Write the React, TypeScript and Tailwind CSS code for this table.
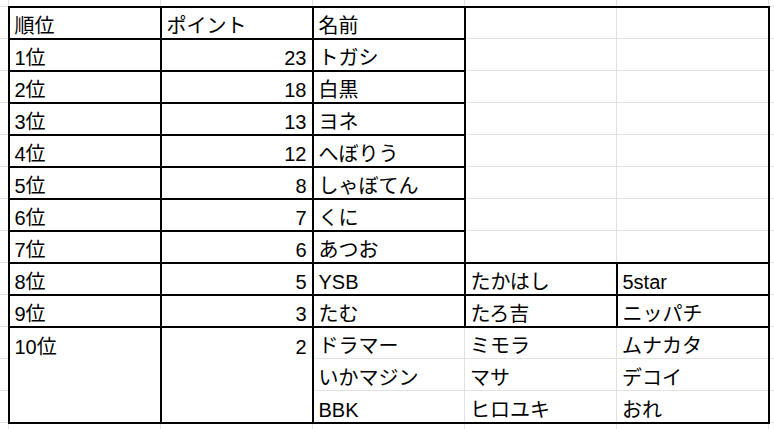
const G = 'border border-[#e2e2e2]';
const B = 'border-2 border-black';
const cell = 'h-[32px] px-[5px] pb-0 pt-0 align-bottom whitespace-nowrap overflow-hidden leading-[24px]';

type Row = { rank: string; pt: string; name: string; d?: string; e?: string };

const top: Row[] = [
  { rank: '1位', pt: '23', name: 'トガシ' },
  { rank: '2位', pt: '18', name: '白黒' },
  { rank: '3位', pt: '13', name: 'ヨネ' },
  { rank: '4位', pt: '12', name: 'へぼりう' },
  { rank: '5位', pt: '8', name: 'しゃぼてん' },
  { rank: '6位', pt: '7', name: 'くに' },
  { rank: '7位', pt: '6', name: 'あつお' },
];

const tied: Row[] = [
  { rank: '8位', pt: '5', name: 'YSB', d: 'たかはし', e: '5star' },
  { rank: '9位', pt: '3', name: 'たむ', d: 'たろ吉', e: 'ニッパチ' },
];

const tenth = [
  { name: 'ドラマー', d: 'ミモラ', e: 'ムナカタ' },
  { name: 'いかマジン', d: 'マサ', e: 'デコイ' },
  { name: 'BBK', d: 'ヒロユキ', e: 'おれ' },
];

function Edge({ className = '' }: { className?: string }) {
  return <td className={`${cell} ${G} ${className}`} />;
}

export default function App() {
  return (
    <div
      className="w-[774px] h-[429px] overflow-hidden bg-white text-black text-[20px]"
      style={{ fontFamily: '"Liberation Sans", Arial, "Noto Sans CJK JP", sans-serif' }}
    >
      <table className="border-collapse table-fixed w-[860px] min-w-[860px] -ml-[32px] -mt-[26px]">
        <colgroup>
          <col className="w-[40px]" />
          <col className="w-[152px]" />
          <col className="w-[152px]" />
          <col className="w-[152px]" />
          <col className="w-[152px]" />
          <col className="w-[152px]" />
          <col className="w-[60px]" />
        </colgroup>
        <tbody>
          {/* row above the table */}
          <tr>
            <Edge />
            <Edge />
            <Edge />
            <Edge />
            <Edge />
            <Edge />
            <Edge />
          </tr>
          {/* header */}
          <tr>
            <Edge />
            <td className={`${cell} ${B}`}>順位</td>
            <td className={`${cell} ${B}`}>ポイント</td>
            <td className={`${cell} ${B}`}>名前</td>
            <td className={`${cell} ${G} border-t-2 border-t-black`} />
            <td className={`${cell} ${G} border-t-2 border-t-black border-r-2 border-r-black`} />
            <Edge />
          </tr>
          {top.map((r) => (
            <tr key={r.rank}>
              <Edge />
              <td className={`${cell} ${B}`}>{r.rank}</td>
              <td className={`${cell} ${B} text-right`}>{r.pt}</td>
              <td className={`${cell} ${B}`}>{r.name}</td>
              <td className={`${cell} ${G}`} />
              <td className={`${cell} ${G} border-r-2 border-r-black`} />
              <Edge />
            </tr>
          ))}
          {tied.map((r) => (
            <tr key={r.rank}>
              <Edge />
              <td className={`${cell} ${B}`}>{r.rank}</td>
              <td className={`${cell} ${B} text-right`}>{r.pt}</td>
              <td className={`${cell} ${B}`}>{r.name}</td>
              <td className={`${cell} ${B}`}>{r.d}</td>
              <td className={`${cell} ${B}`}>{r.e}</td>
              <Edge />
            </tr>
          ))}
          {tenth.map((r, i) => {
            const last = i === tenth.length - 1 ? 'border-b-2 border-b-black' : '';
            return (
              <tr key={r.name}>
                <Edge />
                {i === 0 && (
                  <>
                    <td rowSpan={3} className={`${cell} ${B} align-top pt-[7px]`}>10位</td>
                    <td rowSpan={3} className={`${cell} ${B} align-top pt-[7px] text-right`}>2</td>
                  </>
                )}
                <td className={`${cell} ${G} ${last}`}>{r.name}</td>
                <td className={`${cell} ${G} ${last}`}>{r.d}</td>
                <td className={`${cell} ${G} ${last} border-r-2 border-r-black`}>{r.e}</td>
                <Edge />
              </tr>
            );
          })}
          {/* row below the table */}
          <tr>
            <Edge />
            <Edge />
            <Edge />
            <Edge />
            <Edge />
            <Edge />
            <Edge />
          </tr>
        </tbody>
      </table>
    </div>
  );
}
